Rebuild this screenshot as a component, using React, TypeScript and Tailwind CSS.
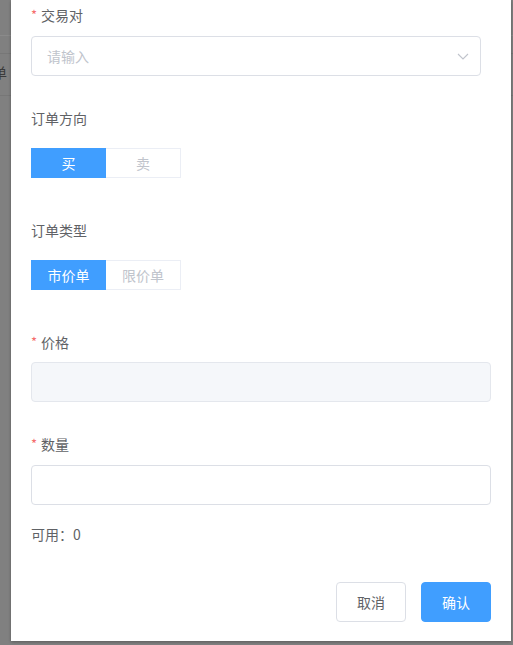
import React from "react";

const font = { fontFamily: '"Noto Sans CJK SC", "Noto Sans", sans-serif' };

function Label({ text, required }: { text: string; required?: boolean }) {
    return (
        <div className="h-[20px] leading-[20px] text-[14px] text-[#606266] flex items-center">
            {required && <span className="text-[#f56c6c] mr-[4px] text-[13px]">*</span>}
            {text}
        </div>
    );
}

function RadioGroup({ options, active }: { options: string[]; active: number }) {
    return (
        <div className="flex">
            {options.map((o, i) => (
                <div
                    key={o}
                    className={
                        i === active
                            ? "w-[75px] h-[30px] flex items-center justify-center text-[14px] bg-[#409eff] border border-[#409eff] text-white"
                            : "w-[75px] h-[30px] flex items-center justify-center text-[14px] bg-white border border-l-0 border-[#ebeef5] text-[#c0c4cc]"
                    }
                >
                    {o}
                </div>
            ))}
        </div>
    );
}

export default function App() {
    return (
        <div className="relative w-[513px] h-[645px] bg-[#808080] overflow-hidden" style={font}>
            {/* page behind the overlay */}
            <div className="absolute left-0 top-[35px] w-full border-t border-[#8a8a8a]" />
            <div className="absolute left-0 top-[53px] w-full border-t border-[#777777]" />
            <div className="absolute left-0 top-[95px] w-full border-t border-[#777777]" />
            <div className="absolute left-[-7px] top-[62px] text-[14px] text-[#3a3a3a]">单</div>

            <div className="relative ml-[11px] w-[500px] h-[641px] bg-white shadow-[0_1px_3px_rgba(0,0,0,0.3)] px-[20px] pt-[5px] flex flex-col">
                <Label text="交易对" required />
                <div className="mt-[11px] w-[450px] h-[40px] border border-[#dcdfe6] rounded-[4px] flex items-center justify-between pl-[15px] pr-[10px]">
                    <span className="text-[14px] text-[#c0c4cc]">请输入</span>
                    <svg width="14" height="14" viewBox="0 0 14 14" fill="none">
                        <polyline points="2,5 7,10 12,5" stroke="#c0c4cc" strokeWidth="1.1" />
                    </svg>
                </div>

                <div className="mt-[32px]">
                    <Label text="订单方向" />
                </div>
                <div className="mt-[20px]">
                    <RadioGroup options={["买", "卖"]} active={0} />
                </div>

                <div className="mt-[42px]">
                    <Label text="订单类型" />
                </div>
                <div className="mt-[20px]">
                    <RadioGroup options={["市价单", "限价单"]} active={0} />
                </div>

                <div className="mt-[42px]">
                    <Label text="价格" required />
                </div>
                <div className="mt-[10px] w-full h-[40px] bg-[#f5f7fa] border border-[#e4e7ed] rounded-[4px]" />

                <div className="mt-[32px]">
                    <Label text="数量" required />
                </div>
                <div className="mt-[11px] w-full h-[40px] bg-white border border-[#dcdfe6] rounded-[4px]" />

                <div className="mt-[19px] h-[20px] leading-[20px] text-[14px] text-[#606266]">可用：0</div>

                <div className="mt-[38px] flex justify-end gap-[15px]">
                    <button className="w-[70px] h-[40px] border border-[#dcdfe6] rounded-[4px] bg-white text-[14px] text-[#606266]">取消</button>
                    <button className="w-[70px] h-[40px] border border-[#409eff] rounded-[4px] bg-[#409eff] text-[14px] text-white">确认</button>
                </div>
            </div>
        </div>
    );
}
